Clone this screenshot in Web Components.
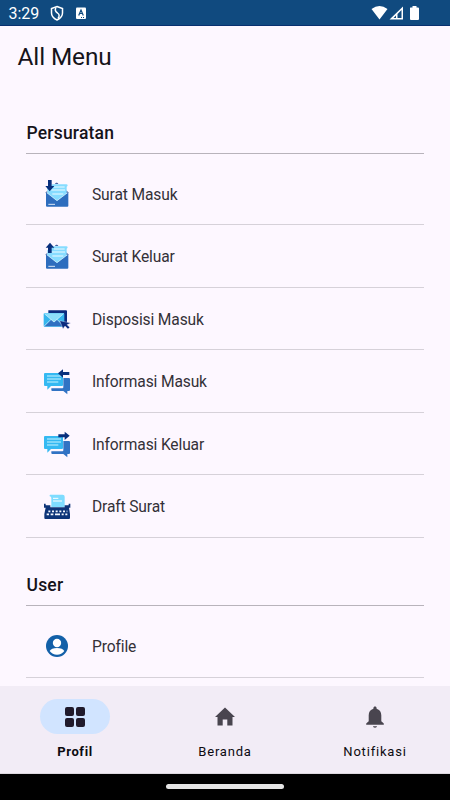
<!DOCTYPE html>
<html lang="id"><head><meta charset="utf-8"><title>All Menu</title>
<style>html,body{margin:0;height:100%;overflow:hidden;font-family:Roboto,"Liberation Sans",sans-serif}</style></head>
<body>
<app-screen>
<status-bar slot="status"></status-bar>
<menu-section heading="Persuratan">
<menu-row icon="in">Surat Masuk</menu-row>
<menu-row icon="out">Surat Keluar</menu-row>
<menu-row icon="disp">Disposisi Masuk</menu-row>
<menu-row icon="chatin">Informasi Masuk</menu-row>
<menu-row icon="chatout">Informasi Keluar</menu-row>
<menu-row icon="draft">Draft Surat</menu-row>
</menu-section>
<menu-section heading="User">
<menu-row icon="profile">Profile</menu-row>
</menu-section>
<nav-bar slot="nav">
<nav-item icon="grid" active>Profil</nav-item>
<nav-item icon="home">Beranda</nav-item>
<nav-item icon="bell">Notifikasi</nav-item>
</nav-bar>
</app-screen>
<script>
const envelope = `<path fill="#0b2f80" d="M28 57l6-7v8zM98 57l-7-8v8zM57 29q1-3 5-3t5 3z"/>
<path fill="#86dcff" d="M48 31h43q4 0 4 4l-3 3v22L63 83 34 62V42q14 0 14-11z"/>
<path stroke="#fff" stroke-width="2.600" d="M54 39h32M46 48h41M49 60h33"/>
<path fill="#2d6dbe" d="M30 55l33 26 34-26v40q0 3-3 3H33q-3 0-3-3z"/>
<path stroke="#fff" stroke-width="1.500" fill="none" d="M31 55l32 25 33-25"/>
<path stroke="#fff" stroke-width="2.500" d="M37 91h20"/>`;
const chat = `<path fill="#3173c4" d="M82 51h17q3 0 3 3v33q0 3-3 3h-5v10L82 90H49q-3 0-3-3v-5h33q3 0 3-3z"/>
<path fill="#35b9f2" d="M27 36h51q3 0 3 3v33q0 3-3 3H45L34 86V75h-7q-3 0-3-3V39q0-3 3-3z"/>
<path stroke="#c9f4ff" stroke-width="3" d="M33 45h42M33 54h42M33 63h34"/>`;
const ICONS = {
in: envelope + `<path fill="#082f7d" d="M36 18h11v18h8L41 52 28 36h8z"/>`,
out: envelope + `<path fill="#082f7d" d="M36 51h11V35h8L42 20 29 35h7z"/>`,
disp: `<path fill="#0b2c7f" d="M37 34h53q3 0 3 3v36H82V42H37z"/>
<path fill="#35b5ed" d="M26 42h56q3 0 3 3v35q0 3-3 3H26q-3 0-3-3V45q0-3 3-3z"/>
<path fill="#2f70c2" d="M25 82l22-21h14l23 21z"/><path fill="#8cdefa" d="M25 43h58L54 70z"/>
<path stroke="#e3faff" stroke-width="2" fill="none" d="M25 44l29 25 29-25M25 81l20-20M83 81L63 61"/>
<path fill="#0b2c7f" stroke="#fdf7ff" stroke-width="1" d="M71 65l33 7-11 5 8 8-5 5-9-9-6 8z"/>`,
chatin: chat + `<path fill="#082f7d" d="M66 37l15-12v8h19v9H81v8z"/>`,
chatout: chat + `<path fill="#082f7d" d="M101 35L86 23v8H67v9h19v8z"/>`,
draft: `<path fill="#7edcff" d="M41 26h39q6 0 6 6v31H46V36q0-5-5-5-1-3 1-5z"/>
<path stroke="#fff" stroke-width="3" d="M51 37h16M51 45h27"/>
<path fill="#0d3478" d="M24 53h5v5h14v6h43v-6h12v-5h5v12h-4l3 19v12q0 3-3 3H28q-3 0-3-3V84l4-19h-5z"/>
<path stroke="#f4f8ff" stroke-width="5" stroke-dasharray="6 5" d="M37 76h57"/><path stroke="#f4f8ff" stroke-width="5" d="M32 85h7M44 85h8M57 85h15M77 85h6M88 85h6"/>`,
profile: `<circle cx="63" cy="60" r="33" fill="#1360a8"/><circle cx="63" cy="51" r="12.500" fill="#fff"/><path fill="#fff" d="M41 75q5-9 22-9t22 9q-8 11-22 11T41 75z"/>`,
};
const NAV = {
grid: `<g fill="#201a2b"><rect x="2" y="2" width="9" height="9" rx="2"/><rect x="13" y="2" width="9" height="9" rx="2"/><rect x="2" y="13" width="9" height="9" rx="2"/><rect x="13" y="13" width="9" height="9" rx="2"/></g>`,
home: `<path fill="#49454f" d="M9.700 20.500V14.500h4.600v6h5.200v-8.500h2.500L12 2.500 2 12h2.500v8.500z"/>`,
bell: `<path fill="#49454f" d="M12 22.700c1.200 0 2-.7 2-1.400h-4c0 .7.800 1.400 2 1.400zm6.300-6.500v-6c0-3.100-1.700-5.600-4.700-6.400V3c0-.8-.7-1.500-1.600-1.500S10.400 2.200 10.400 3v.8c-3 .8-4.700 3.300-4.700 6.400v6L3.200 18.400v1.400h17.600v-1.400z"/>`
};
const define = (name, render) => customElements.define(name, class extends HTMLElement {
  constructor(){ super(); this.attachShadow({mode:'open'}); }
  connectedCallback(){ this.shadowRoot.innerHTML = render(this); }
});
define('app-screen', () => `<style>
:host{display:flex;flex-direction:column;height:800px;width:450px;background:#fdf7ff;color:#16131a}
h1{font-size:24.400px;font-weight:400;line-height:30px;margin:16px 0 0 -8.500px;height:30px;letter-spacing:-.1px}
main{flex:1;min-height:0;overflow:hidden;padding:0 26px}
.sys{height:26px;background:#000;display:flex;justify-content:center}
.sys i{width:118px;height:5px;border-radius:3px;background:#e5e5e5;margin-top:10px}
</style><slot name="status"></slot><main><h1>All Menu</h1><slot></slot></main><slot name="nav"></slot><div class="sys"><i></i></div>`);
define('status-bar', () => `<style>
:host{display:flex;box-sizing:border-box;height:26px;background:#104a7f;border-bottom:1px solid #083070;color:#fff;padding:0 29px 0 8.500px;flex:none}
span{font-size:16px;line-height:28px;width:40.500px}svg{display:block}.gap{flex:1}
</style><span>3:29</span>
<svg width="45" height="25" viewBox="0 0 45 25"><path d="M8 6.500l5.500 2v4.500q0 4.500-5.500 7-5.500-2.500-5.500-7V8.500z" fill="none" stroke="#fff" stroke-width="1.500"/><path d="M7 7.500Q5 11 8.500 13q3 2 .5 5.500" fill="none" stroke="#fff" stroke-width="1.500"/><rect x="27" y="7.500" width="10" height="11.500" rx="1" fill="#fff"/><path d="M29.700 15.500l2.300-5.500 2.300 5.500m-3.800-2h3M32 17.500h1m1 0h1" fill="none" stroke="#104a7f" stroke-width="1.200"/></svg>
<div class="gap"></div>
<svg width="50" height="25" viewBox="0 0 50 25"><path fill="#fff" d="M.5 9q8-6 16 0l-8 10.500zM32 6.500v13H18.500zM39.500 7.500h2V6h4v1.500h1.500q1 0 1 1V19q0 1-1 1h-7q-1 0-1-1V8.500q0-1 .5-1z"/><path fill="#104a7f" d="M26.500 14l4-4v8h-4zM25 15.500v2.500h-2.500z"/></svg>`);
define('menu-section', el => `<style>
:host{display:block;margin-top:46.500px}
:host(:nth-of-type(n+2)){margin-top:33.500px}
h2{margin:0;font-size:17.500px;font-weight:500;line-height:29px;height:34px;letter-spacing:.2px;text-indent:.5px;border-bottom:1px solid #b8b3bb;margin-bottom:9px}
</style><h2>${el.getAttribute('heading')}</h2><slot></slot>`);
define('menu-row', el => `<style>
:host{display:flex;box-sizing:border-box;height:62.500px;border-bottom:1px solid #d6d1d9;padding-left:10px;font-size:15.600px;font-weight:400;line-height:64px;color:#343138;letter-spacing:-.14px}
svg{width:44px;height:44px;margin:11px 12px 0 0;flex:none}
</style><svg viewBox="0 0 132 132">${ICONS[el.getAttribute('icon')]}</svg><slot></slot>`);
define('nav-bar', () => `<style>:host{display:flex;height:87px;flex:none;background:#f2ecf6;border-bottom:1px solid #ddd8df}</style><slot></slot>`);
define('nav-item', el => `<style>
:host{flex:1;display:flex;flex-direction:column;align-items:center;font-size:13px;letter-spacing:.8px;font-weight:400;color:#0c0a10;padding-top:13px}
:host([active]){font-weight:700;letter-spacing:.65px}
div{width:70px;height:35px;border-radius:18px;display:flex;align-items:center;justify-content:center;margin-bottom:10px}
:host([active]) div{background:#d1e4ff}svg{width:24px;height:24px}
</style><div><svg viewBox="0 0 24 24">${NAV[el.getAttribute('icon')]}</svg></div><slot></slot>`);
</script></body></html>
